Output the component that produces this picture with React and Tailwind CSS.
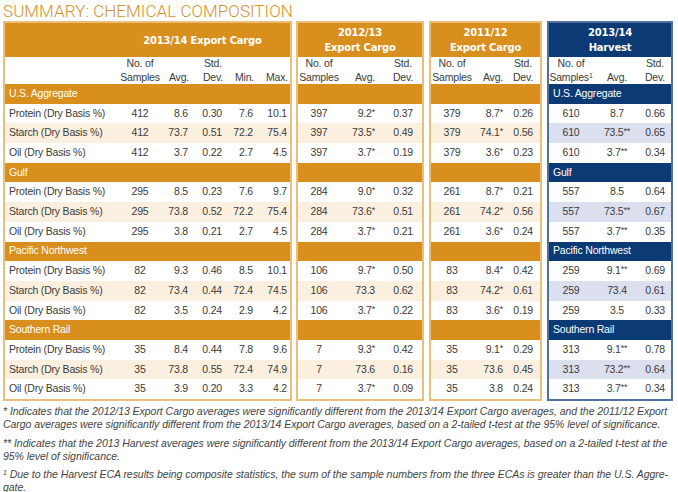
import React from 'react';

const SECTIONS = [
  {
    name: 'U.S. Aggregate',
    rows: [
      ['Protein (Dry Basis %)', ['412', '8.6', '0.30', '7.6', '10.1'], ['397', '9.2*', '0.37'], ['379', '8.7*', '0.26'], ['610', '8.7', '0.66']],
      ['Starch (Dry Basis %)', ['412', '73.7', '0.51', '72.2', '75.4'], ['397', '73.5*', '0.49'], ['379', '74.1*', '0.56'], ['610', '73.5**', '0.65']],
      ['Oil (Dry Basis %)', ['412', '3.7', '0.22', '2.7', '4.5'], ['397', '3.7*', '0.19'], ['379', '3.6*', '0.23'], ['610', '3.7**', '0.34']],
    ],
  },
  {
    name: 'Gulf',
    rows: [
      ['Protein (Dry Basis %)', ['295', '8.5', '0.23', '7.6', '9.7'], ['284', '9.0*', '0.32'], ['261', '8.7*', '0.21'], ['557', '8.5', '0.64']],
      ['Starch (Dry Basis %)', ['295', '73.8', '0.52', '72.2', '75.4'], ['284', '73.6*', '0.51'], ['261', '74.2*', '0.56'], ['557', '73.5**', '0.67']],
      ['Oil (Dry Basis %)', ['295', '3.8', '0.21', '2.7', '4.5'], ['284', '3.7*', '0.21'], ['261', '3.6*', '0.24'], ['557', '3.7**', '0.35']],
    ],
  },
  {
    name: 'Pacific Northwest',
    rows: [
      ['Protein (Dry Basis %)', ['82', '9.3', '0.46', '8.5', '10.1'], ['106', '9.7*', '0.50'], ['83', '8.4*', '0.42'], ['259', '9.1**', '0.69']],
      ['Starch (Dry Basis %)', ['82', '73.4', '0.44', '72.4', '74.5'], ['106', '73.3', '0.62'], ['83', '74.2*', '0.61'], ['259', '73.4', '0.61']],
      ['Oil (Dry Basis %)', ['82', '3.5', '0.24', '2.9', '4.2'], ['106', '3.7*', '0.22'], ['83', '3.6*', '0.19'], ['259', '3.5', '0.33']],
    ],
  },
  {
    name: 'Southern Rail',
    rows: [
      ['Protein (Dry Basis %)', ['35', '8.4', '0.44', '7.8', '9.6'], ['7', '9.3*', '0.42'], ['35', '9.1*', '0.29'], ['313', '9.1**', '0.78']],
      ['Starch (Dry Basis %)', ['35', '73.8', '0.55', '72.4', '74.9'], ['7', '73.6', '0.16'], ['35', '73.6', '0.45'], ['313', '73.2**', '0.64']],
      ['Oil (Dry Basis %)', ['35', '3.9', '0.20', '3.3', '4.2'], ['7', '3.7*', '0.09'], ['35', '3.8', '0.24'], ['313', '3.7**', '0.34']],
    ],
  },
];

const ROW = 'h-[19.7px] items-center';

function Val({ v }) {
  const m = v.match(/^([^*]+)(\**)$/);
  return (
    <>
      {m[1]}
      {m[2] && <sup className="text-[9px] top-[-2px]">{m[2]}</sup>}
    </>
  );
}

function StdHead({ extra = '' }) {
  return (
    <div className={`text-right ${extra}`}>
      <span className="inline-block text-center">
        Std.
        <br />
        Dev.
      </span>
    </div>
  );
}

function ExportPanel() {
  const cols = 'grid grid-cols-[110px_50px_24px_34px_31px_1fr]';
  return (
    <div className="w-[289px] border-2 border-[#ecbf78] flex flex-col">
      <div className={`${cols} h-[34px] items-center bg-[#d98f1d]`}>
        <div className="col-start-2 col-span-5 text-center text-white font-bold font-['DejaVu_Sans',sans-serif] text-[10px]">
          2013/14 Export Cargo
        </div>
      </div>
      <div className={`${cols} h-[27px] items-end bg-white leading-[13.5px] pb-[1px]`}>
        <div />
        <div className="text-center">
          No. of
          <br />
          Samples
        </div>
        <div className="text-right">Avg.</div>
        <StdHead />
        <div className="text-right">Min.</div>
        <div className="text-right pr-[2px]">Max.</div>
      </div>
      {SECTIONS.map((s) => (
        <React.Fragment key={s.name}>
          <div className={`${cols} ${ROW} bg-[#d98f1d] text-white`}>
            <div className="pl-[4px] col-span-6">{s.name}</div>
          </div>
          {s.rows.map((r, i) => (
            <div key={r[0]} className={`${cols} ${ROW} ${i === 1 ? 'bg-[#fbf0df]' : 'bg-white'}`}>
              <div className="pl-[4px] whitespace-nowrap">{r[0]}</div>
              <div className="text-center">{r[1][0]}</div>
              <div className="text-right pr-[1px]">{r[1][1]}</div>
              <div className="text-right pr-[1px]">{r[1][2]}</div>
              <div className="text-right pr-[1px]">{r[1][3]}</div>
              <div className="text-right pr-[3px]">{r[1][4]}</div>
            </div>
          ))}
        </React.Fragment>
      ))}
    </div>
  );
}

function SmallPanel({ idx, title, width, cols, border, head, alt, avgCls, stdPad, samplesLabel, showNames }) {
  return (
    <div className={`${width} border-2 ${border} flex flex-col`}>
      <div className={`h-[34px] flex items-center justify-center ${head}`}>
        <div className="text-center text-white font-bold font-['DejaVu_Sans',sans-serif] text-[10px] leading-[15px]">
          {title[0]}
          <br />
          {title[1]}
        </div>
      </div>
      <div className={`${cols} h-[27px] items-end bg-white leading-[13.5px] pb-[1px]`}>
        <div className="text-center">
          No. of
          <br />
          {samplesLabel}
        </div>
        <div className={avgCls}>Avg.</div>
        <StdHead extra={stdPad} />
      </div>
      {SECTIONS.map((s) => (
        <React.Fragment key={s.name}>
          <div className={`${cols} ${ROW} ${head} text-white`}>
            <div className="pl-[4px] col-span-3 whitespace-nowrap">{showNames ? s.name : ''}</div>
          </div>
          {s.rows.map((r, i) => (
            <div key={r[0]} className={`${cols} ${ROW} ${i === 1 ? alt : 'bg-white'}`}>
              <div className="text-center">{r[idx][0]}</div>
              <div className={avgCls}>
                <Val v={r[idx][1]} />
              </div>
              <div className={`text-right ${stdPad}`}>{r[idx][2]}</div>
            </div>
          ))}
        </React.Fragment>
      ))}
    </div>
  );
}

export default function App() {
  return (
    <div className="w-[678px] h-[492px] bg-white overflow-hidden font-['Liberation_Sans',Arial,sans-serif] text-[10.5px] tracking-[-0.2px] text-[#3b3b3b]">
      <h1 className="pl-[3px] h-[21px] leading-[22px] font-['Roboto',sans-serif] font-light text-[17px] tracking-[0.05px] text-[#d8912a]">
        SUMMARY: CHEMICAL COMPOSITION
      </h1>
      <div className="flex pl-[3px]">
        <ExportPanel />
        <div className="ml-[4px]">
          <SmallPanel
            idx={2}
            title={['2012/13', 'Export Cargo']}
            width="w-[128px]"
            cols="grid grid-cols-[42px_35px_1fr]"
            border="border-[#ecbf78]"
            head="bg-[#d98f1d]"
            alt="bg-[#fbf0df]"
            avgCls="text-right"
            stdPad="pr-[9px]"
            samplesLabel="Samples"
          />
        </div>
        <div className="ml-[5px]">
          <SmallPanel
            idx={3}
            title={['2011/12', 'Export Cargo']}
            width="w-[113px]"
            cols="grid grid-cols-[42px_30px_1fr]"
            border="border-[#ecbf78]"
            head="bg-[#d98f1d]"
            alt="bg-[#fbf0df]"
            avgCls="text-right"
            stdPad="pr-[7px]"
            samplesLabel="Samples"
          />
        </div>
        <div className="ml-[5px]">
          <SmallPanel
            idx={4}
            title={['2013/14', 'Harvest']}
            width="w-[126px]"
            cols="grid grid-cols-[44px_48px_1fr]"
            border="border-[#4f70a0]"
            head="bg-[#0c3a74]"
            alt="bg-[#dcdfee]"
            avgCls="text-center"
            stdPad="pr-[6px]"
            samplesLabel={
              <>
                Samples<sup className="text-[7px] top-[-3px]">1</sup>
              </>
            }
            showNames
          />
        </div>
      </div>
      <div className="pl-[3px] pt-[4px] italic text-[10.5px] leading-[13px] text-[#444] tracking-[-0.04px]">
        <p className="whitespace-nowrap">
          <span className="block">
            * Indicates that the 2012/13 Export Cargo averages were significantly different from the 2013/14 Export Cargo averages, and the 2011/12 Export
          </span>
          <span className="block">
            Cargo averages were significantly different from the 2013/14 Export Cargo averages, based on a 2-tailed t-test at the 95% level of significance.
          </span>
        </p>
        <p className="whitespace-nowrap mt-[5.5px]">
          <span className="block">
            ** Indicates that the 2013 Harvest averages were significantly different from the 2013/14 Export Cargo averages, based on a 2-tailed t-test at the
          </span>
          <span className="block">95% level of significance.</span>
        </p>
        <p className="whitespace-nowrap mt-[5.5px]">
          <span className="block">
            <sup className="text-[7px]">1</sup> Due to the Harvest ECA results being composite statistics, the sum of the sample numbers from the three ECAs is greater than the U.S. Aggre-
          </span>
          <span className="block">gate.</span>
        </p>
      </div>
    </div>
  );
}
